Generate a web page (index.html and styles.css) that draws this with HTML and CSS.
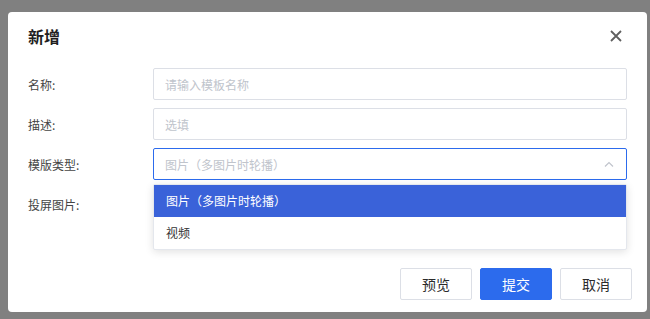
FILE: index.html
```html
<!DOCTYPE html>
<html lang="zh-CN">

<head>
  <meta charset="UTF-8">
  <meta name="viewport" content="width=device-width, initial-scale=1.0">
  <title>新增</title>
  <link rel="stylesheet" href="styles.css">
</head>

<body>
  <div class="dialog">
    <div class="dialog-header">
      <h2>新增</h2>
      <span class="close">
        <svg width="12" height="12" viewBox="0 0 12 12">
          <path d="M1 1L11 11M11 1L1 11" stroke="#5f5f5f" stroke-width="1.8" fill="none" />
        </svg>
      </span>
    </div>
    <div class="dialog-body">
      <div class="form-row">
        <label>名称:</label>
        <div class="field">
          <div class="input placeholder">请输入模板名称</div>
        </div>
      </div>
      <div class="form-row">
        <label>描述:</label>
        <div class="field">
          <div class="input placeholder">选填</div>
        </div>
      </div>
      <div class="form-row">
        <label>模版类型:</label>
        <div class="field select">
          <div class="input focus placeholder">
            图片（多图片时轮播）
            <svg class="arrow" width="10" height="6" viewBox="0 0 10 6">
              <path d="M1 5.5L5 1.5L9 5.5" stroke="#c0c4cc" stroke-width="1.2" fill="none" />
            </svg>
          </div>
          <!-- 下拉选项 -->
          <ul class="dropdown">
            <li class="active">图片（多图片时轮播）</li>
            <li>视频</li>
          </ul>
        </div>
      </div>
      <div class="form-row">
        <label>投屏图片:</label>
        <div class="field"></div>
      </div>
    </div>
    <div class="dialog-footer">
      <button class="btn">预览</button>
      <button class="btn primary">提交</button>
      <button class="btn">取消</button>
    </div>
  </div>
</body>

</html>
```

FILE: styles.css
```css
* {
  margin: 0;
  padding: 0;
  box-sizing: border-box;
}

body {
  background-color: #808080;
  font-family: "Noto Sans CJK SC", "Noto Sans", sans-serif;
  font-size: 12px;
  color: #3a3a3a;
}

.dialog {
  width: 639px;
  height: 300px;
  margin: 12px 0 0 8px;
  background-color: #fff;
  border-radius: 4px;
  display: flex;
  flex-direction: column;

  & .dialog-header {
    height: 48px;
    padding: 0 25px 0 20px;
    display: flex;
    align-items: center;
    justify-content: space-between;

    & h2 {
      font-size: 16px;
      font-weight: 700;
      color: #1f1f1f;
    }

    & .close {
      display: flex;
      width: 12px;
      height: 12px;
    }
  }

  & .dialog-body {
    padding: 8px 20px 0 20px;
    display: flex;
    flex-direction: column;
    gap: 8px;
  }

  & .dialog-footer {
    margin-top: 48px;
    padding-right: 15px;
    display: flex;
    justify-content: flex-end;
    gap: 8px;
  }
}

.form-row {
  display: flex;
  align-items: center;
  height: 32px;

  & label {
    width: 125px;
    color: #444;
  }

  & .field {
    flex: 1;
    height: 32px;
    position: relative;
  }
}

.input {
  height: 32px;
  border: 1px solid #dcdfe6;
  border-radius: 2px;
  padding: 0 11px;
  display: flex;
  align-items: center;
  justify-content: space-between;

  &.placeholder {
    color: #c0c4cc;
  }

  &.focus {
    border-color: #2c6bed;
  }

  & .arrow {
    margin-right: 1px;
  }
}

.dropdown {
  position: absolute;
  top: 36px;
  left: 0;
  right: 0;
  list-style: none;
  background-color: #fff;
  border: 1px solid #e4e7ed;
  border-radius: 2px;
  box-shadow: 0 2px 8px rgba(0, 0, 0, .12);

  & li {
    height: 32px;
    line-height: 32px;
    padding: 0 12px;
    color: #333;
  }

  & li.active {
    background-color: #3a62d9;
    color: #fff;
  }
}

.btn {
  width: 72px;
  height: 32px;
  border: 1px solid #dcdfe6;
  border-radius: 2px;
  background-color: #fff;
  font-family: inherit;
  font-size: 14px;
  color: #2b2b2b;

  &.primary {
    background-color: #2c6bed;
    border-color: #2c6bed;
    color: #fff;
  }
}
```
